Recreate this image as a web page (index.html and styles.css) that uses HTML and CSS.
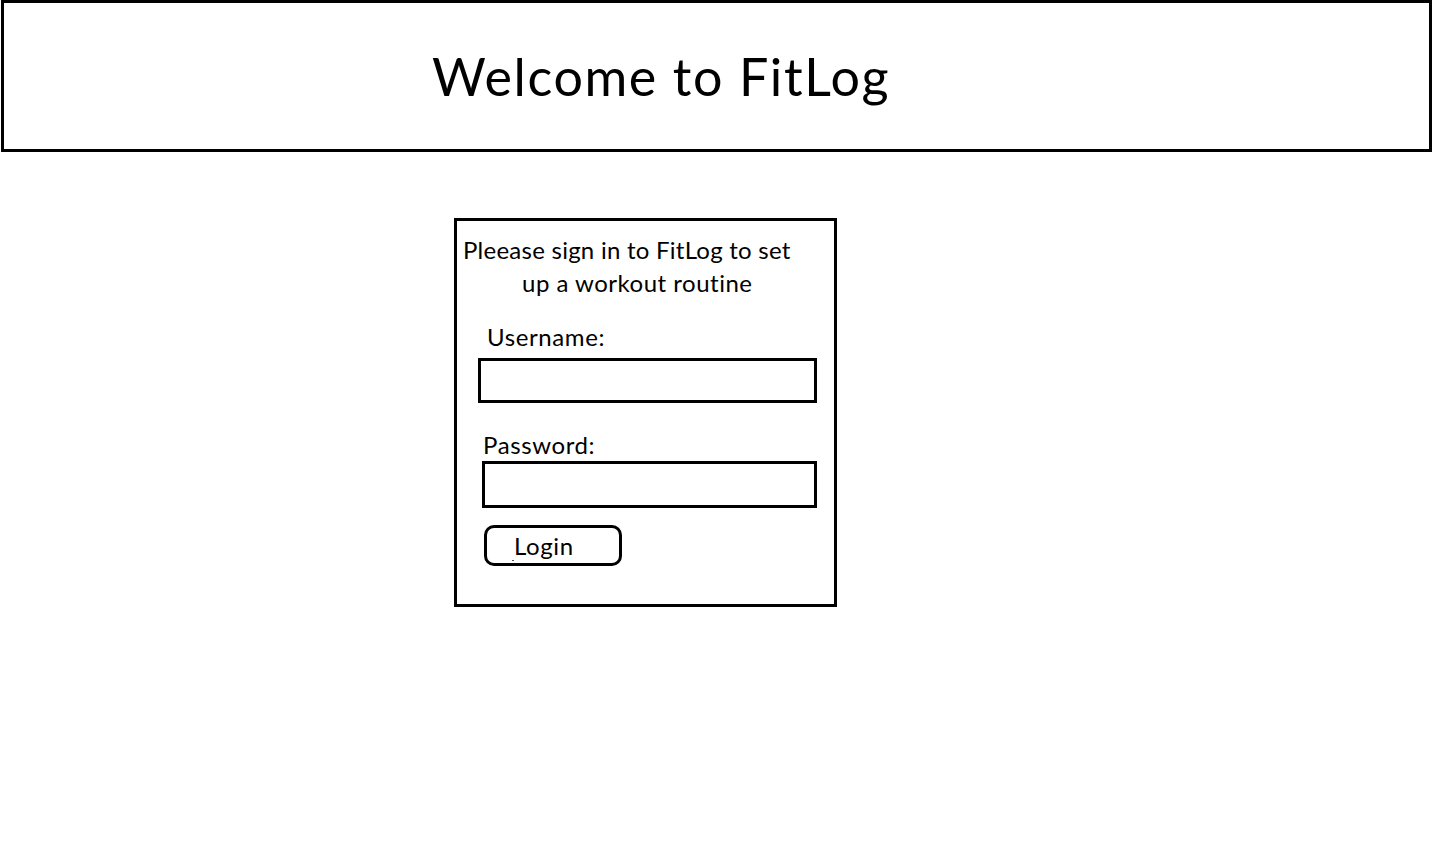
FILE: index.html
```html
<!DOCTYPE html>
<html lang="en">
<head>
<meta charset="utf-8">
<title>FitLog</title>
<link rel="stylesheet" href="styles.css">
</head>
<body>
<header class="banner">
  <h1 class="banner-title">Welcome to FitLog</h1>
</header>
<main class="signin">
  <p class="intro">
    <span class="intro-line intro-line-1">Pleease sign in to FitLog to set</span>
    <span class="intro-line intro-line-2">up a workout routine</span>
  </p>
  <label class="field-label label-user" for="username">Username:</label>
  <input class="field field-user" id="username" type="text">
  <label class="field-label label-pass" for="password">Password:</label>
  <input class="field field-pass" id="password" type="password">
  <button class="login-btn" type="button">Login</button>
</main>
</body>
</html>
```
FILE: styles.css
```css
html, body {
  margin: 0;
  padding: 0;
  background: #ffffff;
}

body {
  font-family: Lato, "Open Sans", sans-serif;
  font-variant-ligatures: none;
  color: #000000;
  width: 1434px;
  height: 853px;
  overflow: hidden;
}

.banner {
  box-sizing: border-box;
  margin-left: 1px;
  width: 1431px;
  height: 152px;
  border: 3px solid #000;
}

.banner-title {
  margin: 0;
  padding-left: 428px;
  font-size: 52px;
  font-weight: 400;
  letter-spacing: 1.6px;
  line-height: 146px;
  height: 146px;
}

.signin {
  box-sizing: border-box;
  margin: 66px 0 0 454px;
  width: 383px;
  height: 389px;
  border: 3px solid #000;
  display: flex;
  flex-direction: column;
  align-items: flex-start;
}

.intro {
  margin: 12px 0 0 0;
  font-size: 24px;
  line-height: 33px;
}

.intro-line {
  display: block;
  white-space: nowrap;
}

.intro-line-1 {
  padding-left: 6px;
  letter-spacing: 0.25px;
}

.intro-line-2 {
  padding-left: 65px;
  letter-spacing: 0.5px;
}

.field-label {
  display: block;
  font-size: 24px;
  line-height: 30px;
  letter-spacing: 0.6px;
}

.label-user {
  margin: 23px 0 0 30px;
}

.label-pass {
  margin: 27px 0 0 26px;
}

.field {
  display: block;
  box-sizing: border-box;
  border: 3px solid #000;
  border-radius: 0;
  padding: 0;
  background: #fff;
  outline: none;
}

.field-user {
  margin: 6px 0 0 21px;
  width: 339px;
  height: 45px;
}

.field-pass {
  margin: 1px 0 0 25px;
  width: 335px;
  height: 47px;
}

.login-btn {
  position: relative;
  box-sizing: border-box;
  margin: 17px 0 0 27px;
  width: 138px;
  height: 41px;
  border: 3px solid #000;
  border-radius: 10px;
  background: #fff;
  padding: 0 0 0 27px;
  text-align: left;
  font-family: Lato, "Open Sans", sans-serif;
  font-variant-ligatures: none;
  font-size: 24px;
  letter-spacing: 0.6px;
  line-height: 35px;
  color: #000;
}

.login-btn::after {
  content: "";
  position: absolute;
  left: 25px;
  top: 32px;
  width: 2px;
  height: 1px;
  background: #555;
}
```
